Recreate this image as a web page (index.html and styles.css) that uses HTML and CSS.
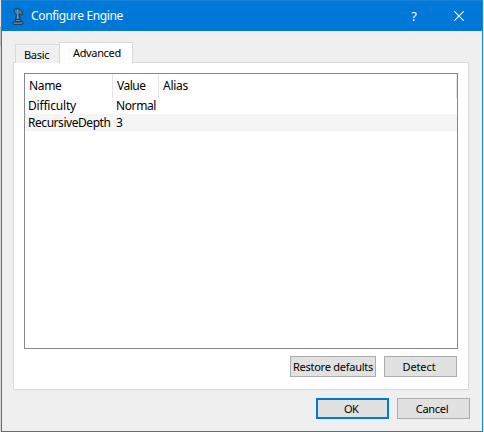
FILE: index.html
```
<!DOCTYPE html>
<html lang="en">
<head>
<meta charset="utf-8">
<title>Configure Engine</title>
<link rel="stylesheet" href="styles.css">
</head>
<body>
<main class="window">
  <header class="titlebar">
    <svg class="knight" width="12" height="17" viewBox="0 0 12 17">
      <path d="M1.8 2.6 3.2.9 6.5.8l3 2 1.5 3.6-1.6.8L7 5.6 8 11v1H3.8L4.4 6.5 2.4 4.8z" fill="#477d9c" stroke="#20384c"/>
      <path d="M5.5 2.5v9" stroke="#7799aa"/>
      <path d="M3.2 11.5h5.6v2H3.2zM1.2 14h9.6v2.3H1.2z" fill="#6c93a5" stroke="#20384c"/>
    </svg>
    <h1 class="title">Configure Engine</h1>
    <span class="help">?</span>
    <svg class="close" width="10" height="10" viewBox="0 0 10 10"><path d="M.3.3l9.4 9.4M9.7.3.3 9.7" stroke="#fff" stroke-width="1.1"/></svg>
  </header>
  <nav class="tabs">
    <div class="tab"><span class="t-basic">Basic</span></div>
    <div class="tab active"><span class="t-advanced">Advanced</span></div>
  </nav>
  <section class="panel">
    <div class="table">
      <div class="row head">
        <div class="cell"><span class="t-name">Name</span></div>
        <div class="cell"><span class="t-value">Value</span></div>
        <div class="cell"><span class="t-alias">Alias</span></div>
      </div>
      <div class="row"><div class="cell"><span class="t-diff">Difficulty</span></div><div class="cell"><span class="t-normal">Normal</span></div></div>
      <div class="row alt"><div class="cell"><span class="t-depth">RecursiveDepth</span></div><div class="cell">3</div></div>
    </div>
    <div class="actions">
      <button class="button wide"><span class="t-restore">Restore defaults</span></button>
      <button class="button"><span class="t-detect">Detect</span></button>
    </div>
  </section>
  <footer class="footer">
    <button class="button default"><span class="t-ok">OK</span></button>
    <button class="button"><span class="t-cancel">Cancel</span></button>
  </footer>
</main>
</body>
</html>
```
FILE: styles.css
```
* { box-sizing: border-box; }
body {
  margin: 0;
  height: 432px;
  padding: 0 1px;
  overflow: hidden;
  background: linear-gradient(#e6e6e6 0 27px, #999 27px 28px, #bdbdbd 28px 46px, #d8d8d8 46px) 0 0 / 1px 100% no-repeat, #e5e8ea;
  font: 12px/16px "Noto Sans", "Open Sans", sans-serif;
  color: #000;
}
.window {
  width: 482px;
  height: 432px;
  border: 1px solid #1c80cc;
  border-top-color: #1683da;
  background: #efefef;
}
.titlebar {
  display: flex;
  align-items: center;
  height: 30px;
  padding-left: 10px;
  background: #0078d7;
  color: #fff;
}
.title { flex: 1; margin: 0 0 0 7px; font-size: 12px; font-weight: 400; letter-spacing: -.35px; }
.help { width: 8px; font-size: 13px; text-align: center; }
.close { margin: 0 18px 0 36px; }
.tabs { display: flex; align-items: flex-end; height: 32px; padding-left: 13px; }
.tab {
  width: 44px;
  height: 19px;
  padding-left: 8px;
  border: 1px solid #d9d9d9;
  border-width: 1px 0 0 1px;
  background: #f0f0f0;
  font-size: 11px;
  line-height: 19px;
}
.tab.active {
  z-index: 1;
  width: 74px;
  height: 22px;
  margin-bottom: -1px;
  padding-left: 13px;
  border-right-width: 1px;
  background: #fff;
}
.panel {
  width: 456px;
  height: 328px;
  margin: -1px 0 0 11px;
  padding: 10px;
  border: 1px solid #d9d9d9;
  background: #fff;
}
.table { width: 434px; height: 276px; border: 1px solid #828790; }
.row { display: grid; grid-template-columns: 88px 46px 1fr; height: 17px; line-height: 17px; }
.cell { padding-left: 3px; white-space: nowrap; }
.head { height: 23px; line-height: 24px; }
.head .cell { padding-left: 4px; border-right: 1px solid #e5e5e5; }
.alt { background: #f5f5f5; }
.actions { display: flex; justify-content: flex-end; gap: 8px; margin-top: 7px; padding-right: 1px; }
.button {
  display: flex;
  align-items: center;
  justify-content: center;
  width: 73px;
  height: 21px;
  padding: 0 3px 0 0;
  border: 1px solid #adadad;
  background: #e1e1e1;
  color: #000;
  font: inherit;
  font-size: 11px;
  white-space: nowrap;
}
.wide { width: 86px; padding: 0; }
.default { border: 2px solid #0078d7; }
.footer { display: flex; justify-content: flex-end; gap: 8px; padding: 8px 12px 0 0; }

.t-basic { letter-spacing: -.3px; }
.t-advanced { letter-spacing: -.35px; }
.t-name { letter-spacing: -.35px; }
.t-value { letter-spacing: -.5px; }
.t-alias { letter-spacing: -.25px; }
.t-diff { letter-spacing: -.2px; }
.t-normal { letter-spacing: -.4px; }
.t-depth { letter-spacing: -.45px; }
.t-restore { letter-spacing: -.25px; }
.t-detect { letter-spacing: -.1px; }
.t-cancel { letter-spacing: -.3px; }
.t-ok { letter-spacing: -.6px; }
```
